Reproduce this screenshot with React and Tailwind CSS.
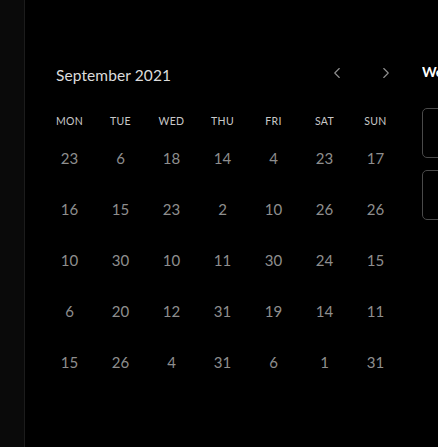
import { ChevronLeft, ChevronRight } from 'lucide-react';

const days = ['MON', 'TUE', 'WED', 'THU', 'FRI', 'SAT', 'SUN'];

const weeks = [
  [23, 6, 18, 14, 4, 23, 17],
  [16, 15, 23, 2, 10, 26, 26],
  [10, 30, 10, 11, 30, 24, 15],
  [6, 20, 12, 31, 19, 14, 11],
  [15, 26, 4, 31, 6, 1, 31],
];

export default function App() {
  return (
    <div
      className="w-[438px] h-[447px] bg-black flex overflow-hidden"
      style={{ fontFamily: 'Lato, "Noto Sans", sans-serif' }}
    >
      {/* Sidebar edge */}
      <div className="w-[25px] shrink-0 h-full bg-[#0a0a0a] border-r border-[#1c1c1c]" />

      {/* Calendar */}
      <div className="w-[397px] shrink-0 pt-[62px] pl-[19px]">
        <div className="flex items-center h-[24px]">
          <h2 className="pl-[12px] text-[15.5px] text-[#dcdcdc] tracking-[0.1px] mt-[4px]">September 2021</h2>
          <div className="ml-auto flex items-center gap-[31px] mr-[27px] mt-[-2px] text-[#8f8f8f]">
            <ChevronLeft size={18} strokeWidth={1.5} />
            <ChevronRight size={18} strokeWidth={1.5} />
          </div>
        </div>

        <div className="mt-[27px] grid grid-cols-[repeat(7,51px)]">
          {days.map((d) => (
            <div key={d} className="h-[18px] flex items-center justify-center text-[10.5px] text-[#c8c8c8] tracking-[0.3px]">
              {d}
            </div>
          ))}
        </div>

        <div className="mt-[10px] grid grid-cols-[repeat(7,51px)] auto-rows-[51px]">
          {weeks.flat().map((n, i) => (
            <div key={i} className="flex items-start justify-center pt-[6px] text-[15px] text-[#8e8e8e]">
              {n}
            </div>
          ))}
        </div>
      </div>

      {/* Right panel */}
      <div className="flex-1 min-w-0 pt-[61px] overflow-hidden">
        <div className="h-[20px] text-[14px] font-bold text-white whitespace-nowrap">Week</div>
        <div className="mt-[27px] flex flex-col gap-[12px] w-[120px]">
          <div className="h-[50px] rounded-[5px] border border-[#4a4a4a]" />
          <div className="h-[50px] rounded-[5px] border border-[#4a4a4a]" />
        </div>
      </div>
    </div>
  );
}
